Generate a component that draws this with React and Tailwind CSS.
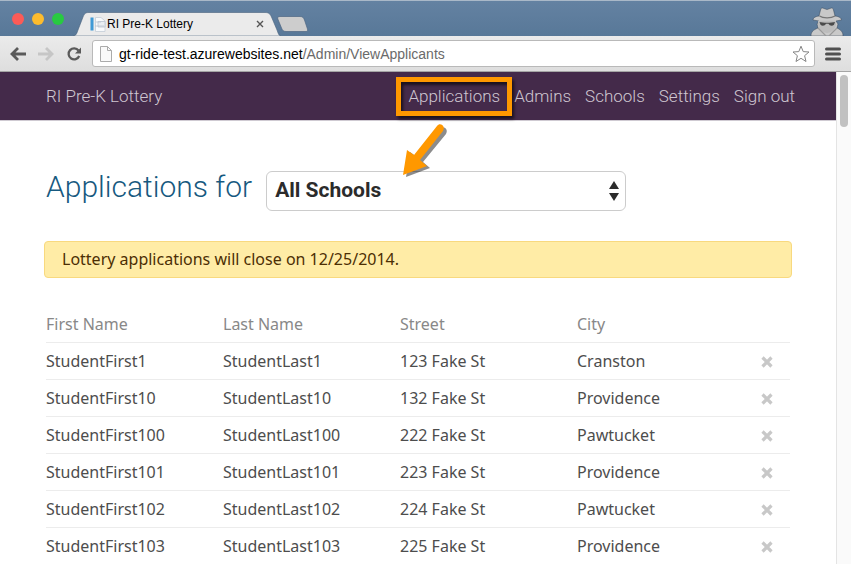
import React from "react";

const applicants = [
  ["StudentFirst1", "StudentLast1", "123 Fake St", "Cranston"],
  ["StudentFirst10", "StudentLast10", "132 Fake St", "Providence"],
  ["StudentFirst100", "StudentLast100", "222 Fake St", "Pawtucket"],
  ["StudentFirst101", "StudentLast101", "223 Fake St", "Providence"],
  ["StudentFirst102", "StudentLast102", "224 Fake St", "Pawtucket"],
  ["StudentFirst103", "StudentLast103", "225 Fake St", "Providence"],
];

function TabStrip() {
  return (
    <div className="relative flex h-9 items-end bg-linear-to-b from-[#6482a2] to-[#587898] shadow-[inset_0_1px_0_#a9b8c8]">
      <div className="flex h-9 w-[73px] shrink-0 items-center gap-2 pl-3 pt-[2px]">
        <button aria-label="Close window" className="size-3 rounded-full bg-[#fc5b57]" />
        <button aria-label="Minimize window" className="size-3 rounded-full bg-[#fdbc2e]" />
        <button aria-label="Zoom window" className="size-3 rounded-full bg-[#28ca41]" />
      </div>
      <div className="relative h-6 w-[208px] shrink-0">
        <svg className="absolute inset-0" width="208" height="24" viewBox="0 0 208 24" aria-hidden="true">
          <path d="M0 24C3 24 4 21 5 18L10 5C11.500 1.500 12.500 .5 16 .5H192C195.500 .5 197 1.500 198.500 5L204 18C205 21 206 24 208 24Z" fill="#ebebeb" stroke="#48617c" strokeWidth=".6" />
        </svg>
        <div className="relative flex h-6 items-center pr-[17px] pl-[17px]">
          <svg width="17" height="17" viewBox="0 0 17 17" className="shrink-0" aria-hidden="true">
            <rect x="0.500" y="1.500" width="3" height="13" fill="#3f9ad6" />
            <path d="M5.500 1.500H11L15 5V15.500H5.500Z" fill="#f8fafc" stroke="#c4cdd7" strokeWidth=".8" />
            <path d="M6 6H11M5 10H14M8 5.500H15V11H8Z" fill="#e9eef3" stroke="#b9c4d0" strokeWidth=".8" />
          </svg>
          <span className="grow text-xs text-black">RI Pre-K Lottery</span>
          <button aria-label="Close tab" className="shrink-0">
            <svg width="8" height="8" viewBox="0 0 8 8" aria-hidden="true">
              <path d="M1 1L7 7M7 1L1 7" stroke="#555" strokeWidth="1.400" />
            </svg>
          </button>
        </div>
      </div>
      <button aria-label="New tab" className="-ml-1 mb-1 shrink-0">
        <svg width="32" height="16" viewBox="0 0 32 16" aria-hidden="true">
          <path d="M3 .5H23C25.500 .5 26.500 1.500 27.500 4L30.500 13C31 14.700 30.500 15.500 29 15.500H9C6.500 15.500 5.500 14.500 4.500 12L.8 3C.2 1.300 1 .5 3 .5Z" fill="#cdcdcd" stroke="#4d6683" strokeWidth=".7" />
        </svg>
      </button>
      <svg className="mr-[6px] ml-auto shrink-0" width="36" height="30" viewBox="0 0 36 30" aria-hidden="true">
        <path d="M2 30C2 26 4 24 9 22L8 18L10 15L4 14C4 12 6 10.500 10 10L11.500 4C12 2 13 1.500 15 2.500L18 3.500L21 2.500C23 1.500 24 2 24.500 4L26 10C30 10.500 32.500 12 32.500 14L27 15L29 18L28 22C32 24 34 26 34 30Z" fill="#c9c9c9" stroke="#334455" strokeOpacity=".5" />
        <path d="M10.500 10C14 12.500 22 12.500 26 10" fill="none" stroke="#777" strokeWidth="1.300" />
        <path d="M9 14.800H27V18C27 23 22 27 18 27C14 27 9 23 9 18Z" fill="#bcbcbc" />
        <path d="M10.500 16C14 17 22 17 26 16L25 18.700C23.500 20.300 20.500 20 19.500 17.800H17C16 20 13 20.300 11.500 18.700Z" fill="#4a4a4a" />
        <path d="M9 22L17 30M28 22L20 30" stroke="#9a9a9a" strokeWidth="1.200" />
      </svg>
    </div>
  );
}

function Toolbar() {
  return (
    <div className="flex h-9 items-center border-b border-[#a5a5a5] bg-linear-to-b from-[#ebebeb] to-[#dedede] pr-[10px] pl-[9px]">
      <button aria-label="Back">
        <svg width="18" height="16" viewBox="0 0 18 16" aria-hidden="true">
          <path d="M17 8H3M9 2L3 8L9 14" fill="none" stroke="#5a5a5a" strokeWidth="2.800" />
        </svg>
      </button>
      <button aria-label="Forward" className="ml-[10px]">
        <svg width="18" height="16" viewBox="0 0 18 16" aria-hidden="true">
          <path d="M1 8H15M9 2L15 8L9 14" fill="none" stroke="#c6c6c6" strokeWidth="2.800" />
        </svg>
      </button>
      <button aria-label="Reload" className="ml-[11px]">
        <svg width="16" height="16" viewBox="0 0 16 16" aria-hidden="true">
          <path d="M12.500 4.500A5.500 5.500 0 1 0 13.200 10" fill="none" stroke="#5a5a5a" strokeWidth="2.300" />
          <path d="M15 1.500V7.500H9Z" fill="#5a5a5a" />
        </svg>
      </button>
      <div className="relative ml-[10px] flex h-[27px] grow items-center rounded-[3px] border border-[#b9b9b9] bg-white pr-1 pl-[7px]">
        <svg width="12" height="16" viewBox="0 0 12 16" className="shrink-0" aria-hidden="true">
          <path d="M.5 .5H7.500L11.500 4.500V15.500H.5Z" fill="#fafafa" stroke="#ababab" />
          <path d="M7.500 .5V4.500H11.500" fill="none" stroke="#ababab" />
        </svg>
        <a href="#address" className="ml-[7px] grow text-sm text-[#6a6a6a]">
          <span className="text-black">gt-ride-test.azurewebsites.net</span>/Admin/ViewApplicants
        </a>
        <button aria-label="Bookmark this page">
          <svg width="18" height="18" viewBox="0 0 18 18" aria-hidden="true">
            <path d="M9 1.200L11.200 6.600L17 7L12.600 10.700L14 16.500L9 13.300L4 16.500L5.400 10.700L1 7L6.800 6.600Z" fill="#fff" stroke="#858585" strokeLinejoin="round" />
          </svg>
        </button>
      </div>
      <button aria-label="Menu" className="ml-[10px]">
        <svg width="16" height="14" viewBox="0 0 16 14" aria-hidden="true">
          <path d="M1.500 2H14.500M1.500 7H14.500M1.500 12H14.500" stroke="#505050" strokeWidth="3" strokeLinecap="round" />
        </svg>
      </button>
    </div>
  );
}

function NavBar() {
  return (
    <nav className="flex h-[49px] items-center justify-between border-b border-[#cfcad2] bg-[#442a4a] pr-[41px] pl-[46px] font-[Roboto,sans-serif] text-[17px] leading-7 font-light text-[#cfc6d1]">
      <a href="#home">RI Pre-K Lottery</a>
      <div className="flex gap-[14px]">
        <a href="#applications" className="relative z-10">
          Applications
          <span className="absolute -top-[5px] -right-3 -bottom-[6px] -left-3 border-[5px] border-[#ff9800] shadow-[2px_3px_3px_rgba(0,0,0,0.6),inset_2px_3px_3px_rgba(0,0,0,0.6)]" />
          <svg className="absolute top-10 -left-2" width="56" height="60" viewBox="0 0 56 60" aria-hidden="true">
            <path d="M6 55L10 30L17 35L40 7C43 3 49 7 46 12L23 40L30 46Z" fill="#000" opacity=".45" />
            <path d="M3 53L7 28L14 33L37 4C40 0 46 4 43 9L20 38L27 44Z" fill="#ff9800" />
          </svg>
        </a>
        <a href="#admins">Admins</a>
        <a href="#schools">Schools</a>
        <a href="#settings">Settings</a>
        <a href="#signout">Sign out</a>
      </div>
    </nav>
  );
}

function ApplicantTable() {
  return (
    <table className="mt-7 w-full table-fixed text-left text-base text-[#4d4d4d]">
      <colgroup>
        <col />
        <col />
        <col />
        <col />
        <col className="w-9" />
      </colgroup>
      <thead>
        <tr className="h-9 border-b border-[#ececec] text-[#888]">
          <th className="p-0 font-normal">First Name</th>
          <th className="p-0 font-normal">Last Name</th>
          <th className="p-0 font-normal">Street</th>
          <th className="p-0 font-normal">City</th>
          <th className="p-0" aria-label="Remove" />
        </tr>
      </thead>
      <tbody>
        {applicants.map((row) => (
          <tr key={row[0]} className="h-[37px] border-b border-[#ececec]">
            {row.map((cell) => (
              <td key={cell} className="p-0">{cell}</td>
            ))}
            <td className="p-0 pt-[2px] pl-[7px]">
              <button aria-label={`Remove ${row[0]}`} className="block">
                <svg width="12" height="12" viewBox="0 0 12 12" aria-hidden="true">
                  <path d="M1.500 1.500L10.500 10.500M10.500 1.500L1.500 10.500" stroke="#c8c8c8" strokeWidth="3.200" />
                </svg>
              </button>
            </td>
          </tr>
        ))}
      </tbody>
    </table>
  );
}

export default function App() {
  return (
    <div className="flex h-screen flex-col overflow-hidden bg-white font-['Liberation_Sans',Arial,sans-serif]">
      <header className="shrink-0">
        <TabStrip />
        <Toolbar />
      </header>
      <div className="flex min-h-0 grow">
        <div className="min-w-0 grow overflow-hidden font-['Noto_Sans',sans-serif]">
          <NavBar />
          <main className="px-[46px] pt-[50px]">
            <div className="flex items-center gap-[14px] font-[Roboto,sans-serif]">
              <h1 className="pb-2 text-[30px] leading-8 font-light text-[#17597f]">
                <label htmlFor="school">Applications for</label>
              </h1>
              <div className="relative w-[360px]">
                <select id="school" className="h-10 w-full appearance-none rounded-md border border-[#ccc] bg-white px-2 text-[21px] font-bold text-[#2b2b2b]">
                  <option>All Schools</option>
                </select>
                <svg className="pointer-events-none absolute top-[10px] right-[7px]" width="10" height="20" viewBox="0 0 10 20" aria-hidden="true">
                  <path d="M5 0L10 8H0ZM5 20L0 12H10Z" fill="#2b2b2b" />
                </svg>
              </div>
            </div>
            <p className="-mx-[2px] mt-[30px] rounded border border-[#f8d97f] bg-[#ffeca6] px-[17px] py-[5px] text-base leading-[25px] text-[#4c2f04]">
              Lottery applications will close on 12/25/2014.
            </p>
            <ApplicantTable />
          </main>
        </div>
        <div className="w-[15px] shrink-0 border-l border-[#e4e4e4] bg-[#fafafa] pt-[3px] pl-[3px]">
          <div className="h-[52px] w-2 rounded-full bg-[#c1c1c1]" />
        </div>
      </div>
    </div>
  );
}
